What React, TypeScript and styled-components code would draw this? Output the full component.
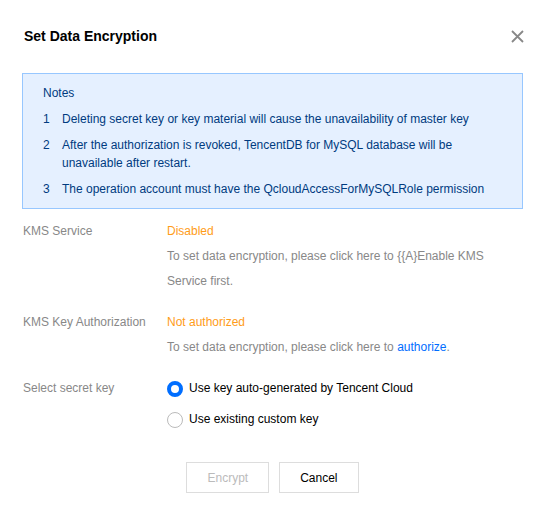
import React, { FC } from 'react';
import styled, { createGlobalStyle } from 'styled-components';

const GlobalStyle = createGlobalStyle`
  body {
    margin: 0;
    background: #fff;
    font-family: "Liberation Sans", Arial, sans-serif;
    font-size: 12px;
    color: #000;
  }
`;

const Dialog = styled.div`
  width: 546px;
  height: 516px;
  box-sizing: border-box;
  padding: 26px 23px 0 22px;
  background: #fff;
`;

const Header = styled.div`
  display: flex;
  align-items: center;
  justify-content: space-between;
  height: 20px;
  padding-left: 2px;
`;

const Title = styled.h2`
  margin: 0;
  font-size: 14px;
  line-height: 20px;
  font-weight: bold;
  color: #000;
`;

const CloseButton = styled.button`
  display: flex;
  align-items: center;
  justify-content: center;
  width: 16px;
  height: 16px;
  padding: 0;
  margin-right: -2px;
  border: none;
  background: none;
  cursor: pointer;
`;

const Notice = styled.div`
  margin-top: 27px;
  padding: 10px 20px 10px 20px;
  background: #e5f0ff;
  border: 1px solid #97c7ff;
  color: #003b80;
  line-height: 18px;
  display: flex;
  flex-direction: column;
  gap: 8px;
`;

const NoticeItem = styled.div`
  display: flex;
`;

const ItemNo = styled.span`
  flex: 0 0 19px;
`;

const Form = styled.div`
  margin-top: 10px;
  padding-left: 1px;
  display: flex;
  flex-direction: column;
  gap: 16px;
  line-height: 25px;
`;

const Row = styled.div`
  display: flex;
`;

const Label = styled.div`
  flex: 0 0 144px;
  color: #888;
`;

const Field = styled.div`
  flex: 1;
  padding-right: 30px;
`;

const Status = styled.div`
  color: #ff9c19;
`;

const Hint = styled.div`
  color: #888;
`;

const Link = styled.a`
  color: #006eff;
  text-decoration: none;
`;

const RadioGroup = styled.div`
  display: flex;
  flex-direction: column;
  gap: 6px;
`;

const RadioLabel = styled.label`
  display: flex;
  align-items: center;
  gap: 6px;
  color: #000;
  cursor: pointer;
`;

const RadioDot = styled.span<{ $checked?: boolean }>`
  box-sizing: border-box;
  width: 16px;
  height: 16px;
  border-radius: 50%;
  background: #fff;
  border: ${(p) => (p.$checked ? '4.5px solid #006eff' : '1px solid #bbb')};
`;

const Footer = styled.div`
  margin-top: 30px;
  display: flex;
  justify-content: center;
  gap: 10px;
`;

const Button = styled.button<{ $disabled?: boolean }>`
  height: 31px;
  padding: 0 20px;
  background: #fff;
  border: 1px solid #ddd;
  font-family: inherit;
  font-size: 12px;
  color: ${(p) => (p.$disabled ? '#bbb' : '#000')};
  cursor: ${(p) => (p.$disabled ? 'not-allowed' : 'pointer')};
`;

const notes = [
  'Deleting secret key or key material will cause the unavailability of master key',
  'After the authorization is revoked, TencentDB for MySQL database will be unavailable after restart.',
  'The operation account must have the QcloudAccessForMySQLRole permission',
];

const kmsHint = 'To set data encryption, please click here to {{A}Enable KMS Service first.';

const App: FC = () => {
  return (
    <>
      <GlobalStyle />
      <Dialog>
        <Header>
          <Title>Set Data Encryption</Title>
          <CloseButton aria-label="close">
            <svg width="13" height="13" viewBox="0 0 13 13">
              <path d="M1 1 L12 12 M12 1 L1 12" stroke="#888" strokeWidth="1.8" />
            </svg>
          </CloseButton>
        </Header>

        <Notice>
          <div>Notes</div>
          {notes.map((n, i) => (
            <NoticeItem key={i}>
              <ItemNo>{i + 1}</ItemNo>
              <span>{n}</span>
            </NoticeItem>
          ))}
        </Notice>

        <Form>
          <Row>
            <Label>KMS Service</Label>
            <Field>
              <Status>Disabled</Status>
              <Hint>{kmsHint}</Hint>
            </Field>
          </Row>
          <Row>
            <Label>KMS Key Authorization</Label>
            <Field>
              <Status>Not authorized</Status>
              <Hint>
                To set data encryption, please click here to <Link href="#">authorize</Link>.
              </Hint>
            </Field>
          </Row>
          <Row>
            <Label>Select secret key</Label>
            <RadioGroup>
              <RadioLabel>
                <RadioDot $checked />
                Use key auto-generated by Tencent Cloud
              </RadioLabel>
              <RadioLabel>
                <RadioDot />
                Use existing custom key
              </RadioLabel>
            </RadioGroup>
          </Row>
        </Form>

        <Footer>
          <Button $disabled>Encrypt</Button>
          <Button>Cancel</Button>
        </Footer>
      </Dialog>
    </>
  );
};

export default App;
